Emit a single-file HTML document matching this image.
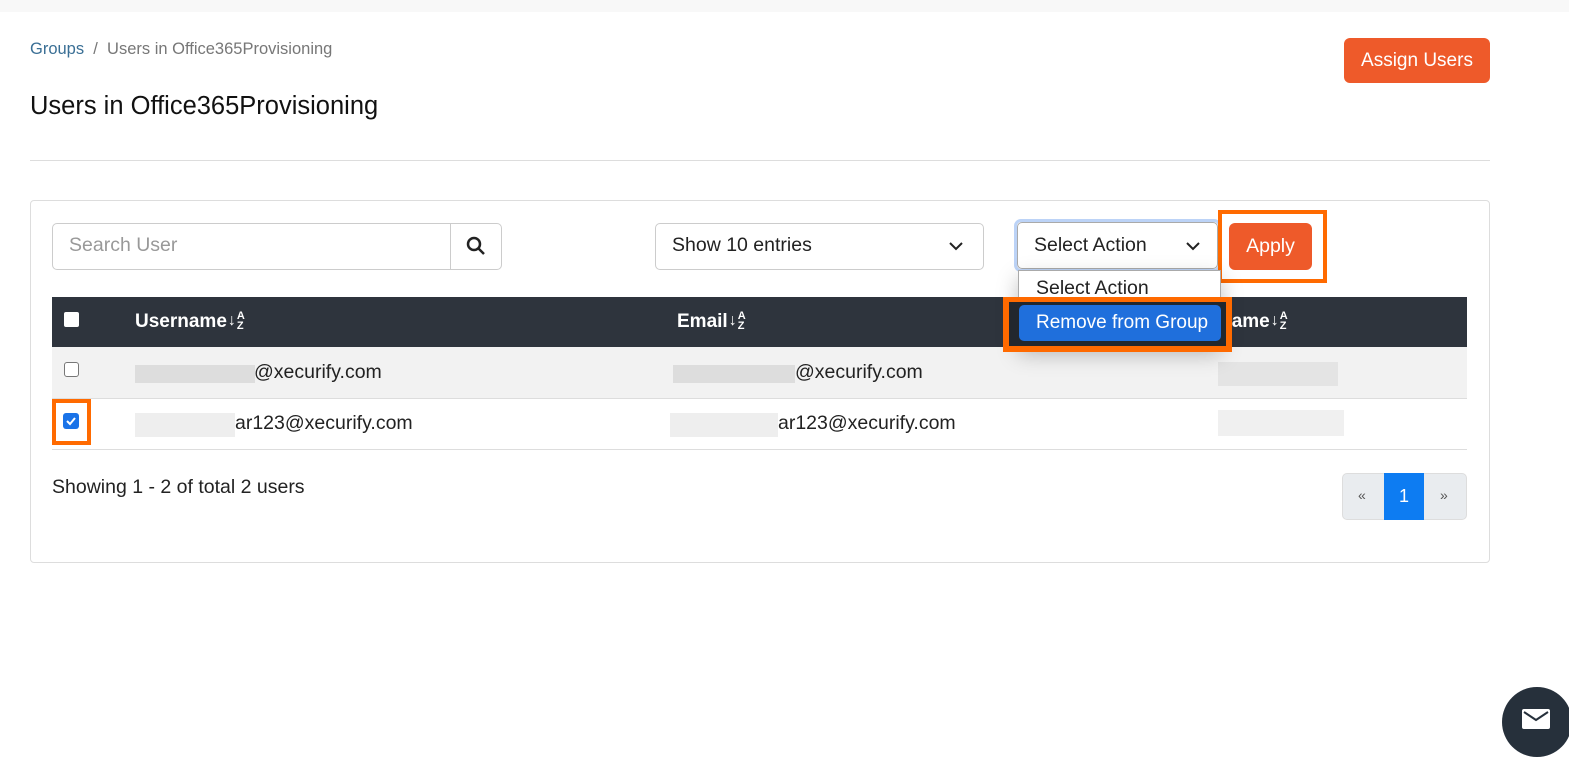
<!DOCTYPE html>
<html><head><style>
*{box-sizing:border-box;margin:0;padding:0}
body{width:1569px;height:759px;background:#fff;font-family:"Liberation Sans",sans-serif;color:#222;position:relative;overflow:hidden}
.a{position:absolute;white-space:nowrap}
.sort{font-size:11px;line-height:10px;display:inline-block;vertical-align:top;margin-left:1px;font-weight:bold}
.t{font-size:19.5px}
</style></head><body>
<div class="a" style="left:0;top:0;width:1569px;height:12px;background:#f8f8f8"></div>
<div class="a" style="left:30px;top:40px;font-size:16.5px;color:#777"><span style="color:#3a6f95">Groups</span> &nbsp;/ &nbsp;Users in Office365Provisioning</div>
<div class="a" style="left:30px;top:92px;font-size:25.5px;color:#111">Users in Office365Provisioning</div>
<div class="a" style="left:1344px;top:38px;width:146px;height:45px;background:#ee5a2a;border-radius:6px;color:#fff;font-size:19px;text-align:center;line-height:45px">Assign Users</div>
<div class="a" style="left:30px;top:160px;width:1460px;height:1px;background:#ddd"></div>
<div class="a" style="left:30px;top:200px;width:1460px;height:363px;border:1px solid #ddd;border-radius:4px"></div>
<div class="a" style="left:52px;top:223px;width:450px;height:47px;border:1px solid #ccc;border-radius:5px"></div>
<div class="a" style="left:450px;top:223px;width:1px;height:47px;background:#ccc"></div>
<div class="a t" style="left:69px;top:234px;color:#999">Search User</div>
<svg class="a" style="left:466px;top:236px" width="20" height="20" viewBox="0 0 20 20"><circle cx="8" cy="8" r="6" fill="none" stroke="#222" stroke-width="2.5"/><path d="M12.5 12.5L18 18" stroke="#222" stroke-width="2.5"/></svg>
<div class="a" style="left:655px;top:223px;width:329px;height:47px;border:1px solid #ccc;border-radius:5px"></div>
<div class="a t" style="left:672px;top:234px">Show 10 entries</div>
<svg class="a" style="left:948px;top:240px" width="16" height="12"><path d="M2 3l6 6 6-6" fill="none" stroke="#222" stroke-width="2"/></svg>
<div class="a" style="left:1014px;top:219px;width:207px;height:53px;border:3px solid #bcd3f7;border-radius:7px"></div>
<div class="a" style="left:1017px;top:222px;width:201px;height:47px;border:1px solid #aaa;border-radius:5px;background:#fff"></div>
<div class="a t" style="left:1034px;top:234px">Select Action</div>
<svg class="a" style="left:1185px;top:240px" width="16" height="12"><path d="M2 3l6 6 6-6" fill="none" stroke="#222" stroke-width="2"/></svg>
<div class="a" style="left:1218px;top:210px;width:109px;height:73px;border:4px solid #ff6a00"></div>
<div class="a" style="left:1229px;top:223px;width:83px;height:47px;background:#ee5a2a;border-radius:6px;color:#fff;font-size:19.5px;text-align:center;line-height:47px">Apply</div>
<div class="a" style="left:52px;top:297px;width:1415px;height:50px;background:#2e343d"></div>
<div class="a" style="left:64px;top:312px;width:15px;height:15px;background:#fff;border-radius:2px"></div>
<div class="a" style="left:135px;top:311px;color:#fff;font-weight:bold;font-size:19px">Username<span class="sort" style="font-size:16px;line-height:20px">↓</span><span class="sort">A<br>Z</span></div>
<div class="a" style="left:677px;top:311px;color:#fff;font-weight:bold;font-size:19px">Email<span class="sort" style="font-size:16px;line-height:20px">↓</span><span class="sort">A<br>Z</span></div>
<div class="a" style="left:1218px;top:311px;color:#fff;font-weight:bold;font-size:19px">Name<span class="sort" style="font-size:16px;line-height:20px">↓</span><span class="sort">A<br>Z</span></div>
<div class="a" style="left:52px;top:347px;width:1415px;height:52px;background:#f2f2f2;border-bottom:1px solid #ddd"></div>
<div class="a" style="left:52px;top:449px;width:1415px;height:1px;background:#ddd"></div>
<div class="a" style="left:64px;top:362px;width:15px;height:15px;border:1px solid #777;border-radius:3px;background:#fff"></div>
<div class="a" style="left:135px;top:365px;width:120px;height:18px;background:#ddd"></div>
<div class="a t" style="left:254px;top:361px">@xecurify.com</div>
<div class="a" style="left:673px;top:365px;width:122px;height:18px;background:#ddd"></div>
<div class="a t" style="left:795px;top:361px">@xecurify.com</div>
<div class="a" style="left:1218px;top:362px;width:120px;height:24px;background:#e4e4e4"></div>
<div class="a" style="left:52px;top:399px;width:39px;height:46px;background:#ff6a00"></div>
<div class="a" style="left:56px;top:403px;width:31px;height:38px;background:#fff"></div>
<div class="a" style="left:63px;top:413px;width:16px;height:16px;background:#1a73e8;border-radius:3px"></div>
<svg class="a" style="left:63px;top:413px" width="16" height="16"><path d="M4 8l3 3 5-6" fill="none" stroke="#fff" stroke-width="2"/></svg>
<div class="a" style="left:135px;top:413px;width:100px;height:24px;background:#eee"></div>
<div class="a t" style="left:235px;top:412px">ar123@xecurify.com</div>
<div class="a" style="left:670px;top:413px;width:108px;height:24px;background:#eee"></div>
<div class="a t" style="left:778px;top:412px">ar123@xecurify.com</div>
<div class="a" style="left:1218px;top:410px;width:126px;height:26px;background:#f0f0f0"></div>
<div class="a" style="left:1018px;top:270px;width:203px;height:76px;background:#fff;border:1px solid #aaa;box-shadow:0 8px 20px rgba(0,0,0,.25)"></div>
<div class="a t" style="left:1036px;top:277px">Select Action</div>
<div class="a" style="left:1003px;top:297px;width:229px;height:55px;background:#ff6a00"></div>
<div class="a" style="left:1009px;top:302px;width:217px;height:44px;background:#22272e"></div>
<div class="a" style="left:1019px;top:305px;width:202px;height:36px;background:#1f6fdc;border-radius:5px;color:#fff;font-size:19px;line-height:36px;padding-left:17px">Remove from Group</div>
<div class="a t" style="left:52px;top:476px">Showing 1 - 2 of total 2 users</div>
<div class="a" style="left:1342px;top:473px;width:125px;height:47px;background:#e9ecef;border:1px solid #ddd;border-radius:5px"></div>
<div class="a" style="left:1358px;top:487px;font-size:14px;color:#555">«</div>
<div class="a" style="left:1384px;top:473px;width:40px;height:47px;background:#0d7cf2;color:#fff;font-size:18px;text-align:center;line-height:47px">1</div>
<div class="a" style="left:1440px;top:487px;font-size:14px;color:#555">»</div>
<div class="a" style="left:1502px;top:687px;width:70px;height:70px;border-radius:50%;background:#26303b"></div>
<svg class="a" style="left:1521px;top:708px" width="30" height="24"><rect x="1" y="1" width="28" height="20" rx="2" fill="#fff"/><path d="M3 4l12 8 12-8" fill="none" stroke="#26303b" stroke-width="2"/></svg>
</body></html>
